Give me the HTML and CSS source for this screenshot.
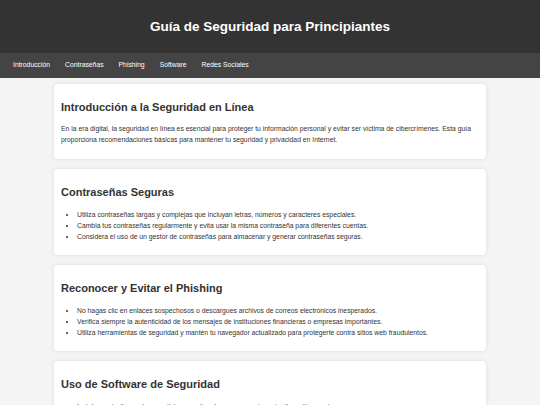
FILE: index.html
```html
<!DOCTYPE html>
<html lang="es">
  <head>
    <meta charset="utf-8" />
    <title>Guía de Seguridad para Principiantes</title>
    <link rel="stylesheet" href="styles.css">
  </head>

  <body>
    <header class="site-header">
      <h1>Guía de Seguridad para Principiantes</h1>
    </header>

    <nav class="site-nav">
      <a href="#intro">Introducción</a>
      <a href="#passwords">Contraseñas</a>
      <a href="#phishing">Phishing</a>
      <a href="#software">Software</a>
      <a href="#social">Redes Sociales</a>
    </nav>

    <main class="container">
      <section id="intro" class="card">
        <h2>Introducción a la Seguridad en Línea</h2>
        <p>En la era digital, la seguridad en línea es esencial para proteger tu información personal y evitar ser víctima de cibercrímenes. Esta guía proporciona recomendaciones básicas para mantener tu seguridad y privacidad en Internet.</p>
      </section>

      <section id="passwords" class="card">
        <h2>Contraseñas Seguras</h2>
        <ul>
          <li>Utiliza contraseñas largas y complejas que incluyan letras, números y caracteres especiales.</li>
          <li>Cambia tus contraseñas regularmente y evita usar la misma contraseña para diferentes cuentas.</li>
          <li>Considera el uso de un gestor de contraseñas para almacenar y generar contraseñas seguras.</li>
        </ul>
      </section>

      <section id="phishing" class="card">
        <h2>Reconocer y Evitar el Phishing</h2>
        <ul>
          <li>No hagas clic en enlaces sospechosos o descargues archivos de correos electrónicos inesperados.</li>
          <li>Verifica siempre la autenticidad de los mensajes de instituciones financieras o empresas importantes.</li>
          <li>Utiliza herramientas de seguridad y mantén tu navegador actualizado para protegerte contra sitios web fraudulentos.</li>
        </ul>
      </section>

      <section id="software" class="card">
        <h2>Uso de Software de Seguridad</h2>
        <ul>
          <li>Instala y actualiza un buen antivirus y anti-malware para proteger tu dispositivo contra amenazas.</li>
          <li>Activa el firewall de tu sistema operativo para bloquear accesos no autorizados.</li>
          <li>Realiza copias de seguridad periódicas de tus archivos importantes.</li>
        </ul>
      </section>
    </main>
  </body>
</html>
```

FILE: styles.css
```css
body {
  margin: 0;
  font-family: "Liberation Sans", Arial, sans-serif;
  font-size: 6.8px;
  line-height: 1.6;
  background: #f4f4f4;
  color: #333;
}

.site-header {
  background: #333;
  color: #fff;
  height: 53px;
  display: flex;
  align-items: center;
  justify-content: center;
}

.site-header h1 {
  margin: 0;
  font-size: 13.5px;
}

.site-nav {
  background: #444;
  height: 25px;
  display: flex;
  align-items: center;
  padding: 0 5.5px;
}

.site-nav a {
  color: #fff;
  text-decoration: none;
  padding: 0 7.5px;
}

.container {
  width: 80%;
  margin: 0 auto;
  padding-top: 6px;
}

.card {
  background: #fff;
  margin-bottom: 10px;
  padding: 7px;
  border-radius: 4px;
  box-shadow: 0 0 4px rgba(0, 0, 0, 0.1);
}

.card h2 {
  font-size: 11px;
  margin: 10px 0;
  line-height: 1.15;
}

.card ul {
  margin: 11.5px 0 5.3px;
  padding-left: 16px;
}
```
